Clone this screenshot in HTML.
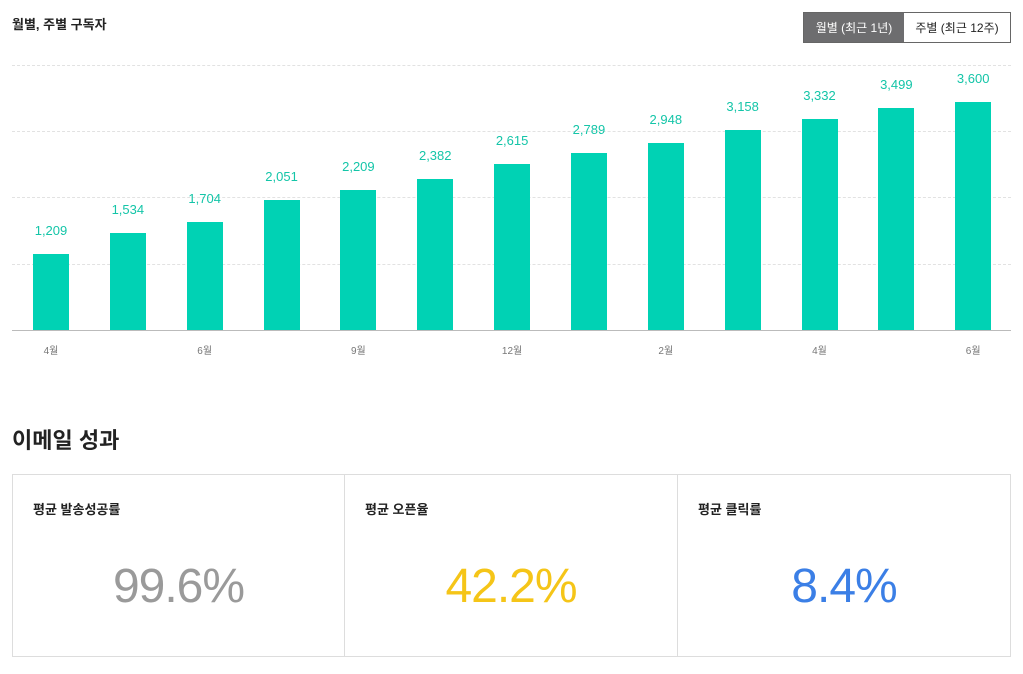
<!DOCTYPE html>
<html><head><meta charset="utf-8"><style>
body{margin:0;width:1023px;height:674px;background:#fff;position:relative;overflow:hidden;font-family:"Liberation Sans","Noto Sans CJK KR",sans-serif;color:#222}
.a{position:absolute}
.grid{position:absolute;left:12px;width:999px;border-top:1px dashed #e2e2e2;height:0}
.bar{position:absolute;width:36px;background:#00d2b4}
.lbl{position:absolute;width:76px;text-align:center;font-size:13px;color:#14c5a8}
.ax{position:absolute;width:60px;text-align:center;font-size:10px;color:#777;top:342px}
.card{position:absolute;top:474px;height:183px;border:1px solid #ddd;box-sizing:border-box}
.ct{position:absolute;left:20px;top:24px;font-size:13px;font-weight:bold;color:#222}
.big{position:absolute;left:0;right:0;top:84px;text-align:center;font-size:48px;line-height:56px;letter-spacing:-1px}
</style></head><body>
<div class="a" style="left:12px;top:14px;font-size:13px;font-weight:bold;color:#222">월별, 주별 구독자</div>
<div class="a" style="left:803px;top:12px;width:208px;height:31px;border:1px solid #666;box-sizing:border-box;font-size:12px;display:flex">
<div style="width:100px;background:#6d6d6f;color:#fff;display:flex;align-items:center;justify-content:center">월별 (최근 1년)</div>
<div style="flex:1;display:flex;align-items:center;justify-content:center;color:#222">주별 (최근 12주)</div></div>
<div class="grid" style="top:65px"></div><div class="grid" style="top:131px"></div><div class="grid" style="top:197px"></div><div class="grid" style="top:264px"></div>
<div class="a" style="left:12px;top:330px;width:999px;height:1px;background:#bbb"></div>
<div id="bars"></div>
<script>
var v=["1,209","1,534","1,704","2,051","2,209","2,382","2,615","2,789","2,948","3,158","3,332","3,499","3,600"];
var t=[254,233,222,200,190,179,164,153,143,130,119,108,102];
var ax={0:"4월",2:"6월",4:"9월",6:"12월",8:"2월",10:"4월",12:"6월"};
var h="";
for(var i=0;i<13;i++){var x=33+i*76.85;
h+='<div class="bar" style="left:'+x+'px;top:'+t[i]+'px;height:'+(330-t[i])+'px"></div>';
h+='<div class="lbl" style="left:'+(x-20)+'px;top:'+(t[i]-31)+'px">'+v[i]+'</div>';
if(ax[i])h+='<div class="ax" style="left:'+(x-12)+'px">'+ax[i]+'</div>';}
document.getElementById("bars").innerHTML=h;
</script>
<div class="a" style="left:12px;top:423px;font-size:22px;font-weight:bold;color:#222">이메일 성과</div>
<div class="card" style="left:12px;width:333px"><div class="ct">평균 발송성공률</div><div class="big" style="color:#9a9a9a">99.6%</div></div>
<div class="card" style="left:344px;width:334px"><div class="ct">평균 오픈율</div><div class="big" style="color:#f5c518">42.2%</div></div>
<div class="card" style="left:677px;width:334px"><div class="ct">평균 클릭률</div><div class="big" style="color:#3b7fe6">8.4%</div></div>
</body></html>
